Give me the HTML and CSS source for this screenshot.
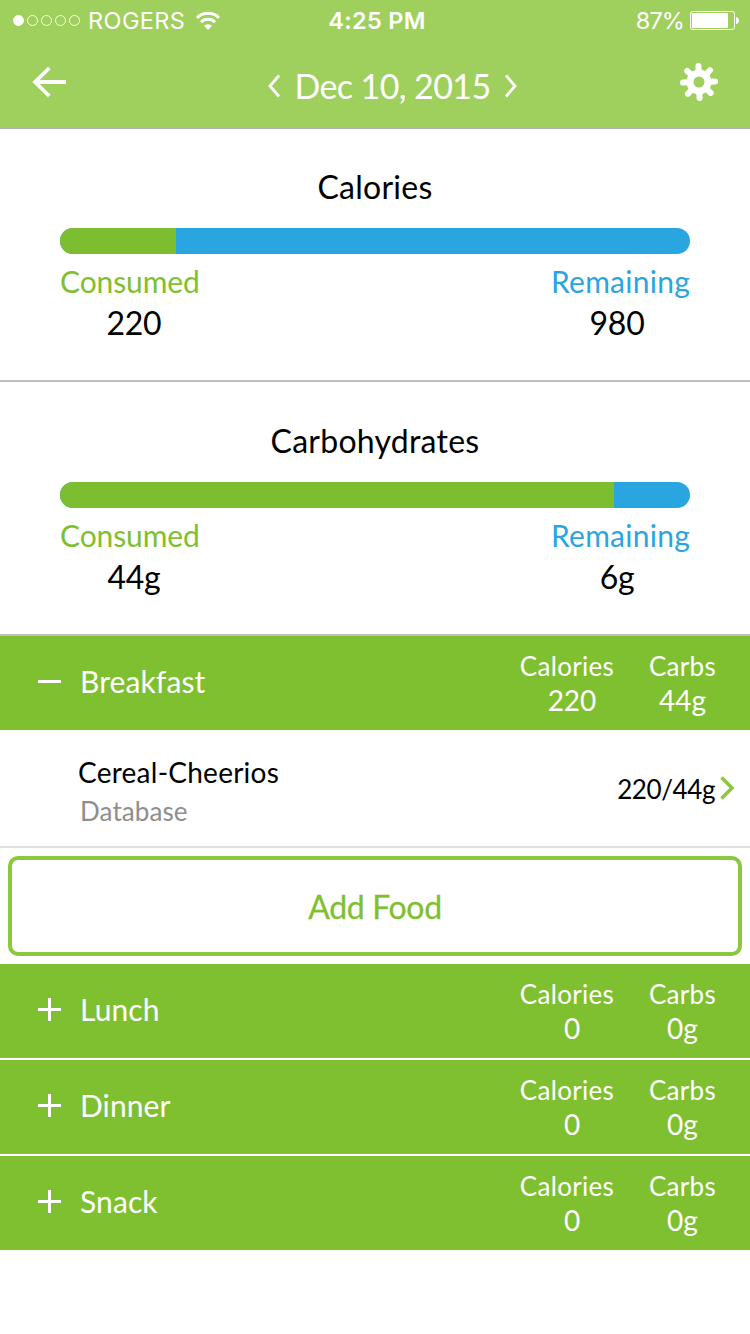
FILE: index.html
```html
<!DOCTYPE html>
<html lang="en">
<head>
    <meta charset="UTF-8">
    <meta name="viewport" content="width=device-width, initial-scale=1.0">
    <title>Food Diary</title>
    <link rel="stylesheet" href="styles.css">
</head>
<body>

<header class="header">
    <div class="status-bar">
        <div class="carrier">
            <div class="signal">
                <span class="dot filled"></span>
                <span class="dot"></span>
                <span class="dot"></span>
                <span class="dot"></span>
                <span class="dot"></span>
            </div>
            <span class="carrier-name">ROGERS</span>
            <svg class="wifi" width="26" height="20" viewBox="0 0 26 20">
                <path d="M2 6.8a15.8 15.8 0 0 1 22 0" fill="none" stroke="#fff" stroke-width="3"/>
                <path d="M6 11.2a10 10 0 0 1 14 0" fill="none" stroke="#fff" stroke-width="3"/>
                <path d="M13 19l-4-4.2a5.8 5.8 0 0 1 8 0z" fill="#fff"/>
            </svg>
        </div>
        <div class="time">4:25 PM</div>
        <div class="battery">
            <span class="percent">87%</span>
            <svg width="49" height="19" viewBox="0 0 49 19">
                <rect x="0.5" y="0.5" width="44" height="18" rx="2.5" fill="none" stroke="#fff"/>
                <rect x="2" y="2" width="36" height="15" rx="1" fill="#fff"/>
                <path d="M46 6q3 0.5 3 3.5t-3 3.5z" fill="#fff"/>
            </svg>
        </div>
    </div>
    <nav class="nav">
        <svg class="back" width="36" height="32" viewBox="0 0 36 32">
            <path d="M34 16H3M17.3 2L3 16l14.3 14" fill="none" stroke="#fff" stroke-width="3.8"/>
        </svg>
        <div class="date">
            <svg width="14" height="24" viewBox="0 0 14 24">
                <path d="M12 1.5L3 12l9 10.5" fill="none" stroke="#fff" stroke-width="2.8"/>
            </svg>
            <span class="date-text">Dec 10, 2015</span>
            <svg width="14" height="24" viewBox="0 0 14 24">
                <path d="M2 1.5L11 12 2 22.5" fill="none" stroke="#fff" stroke-width="2.8"/>
            </svg>
        </div>
        <svg class="gear" width="38" height="38" viewBox="-19 -19 38 38">
            <g transform="rotate(-2)" stroke="#fff" stroke-width="6" stroke-linecap="round">
                <path d="M0 -16V-10M0 16V10M-16 0H-10M16 0H10"/>
                <path d="M-11.4 -11.4l4 4M11.4 -11.4l-4 4M-11.4 11.4l4 -4M11.4 11.4l-4 -4"/>
            </g>
            <circle r="9" fill="none" stroke="#fff" stroke-width="7"/>
        </svg>
    </nav>
</header>

<section class="summary">
    <h2>Calories</h2>
    <div class="bar">
        <div class="bar-fill" style="width: 18.4%"></div>
    </div>
    <div class="totals">
        <div class="total consumed">
            <div class="label">Consumed</div>
            <div class="value">220</div>
        </div>
        <div class="total remaining">
            <div class="label">Remaining</div>
            <div class="value">980</div>
        </div>
    </div>
</section>

<section class="summary">
    <h2>Carbohydrates</h2>
    <div class="bar">
        <div class="bar-fill" style="width: 88%"></div>
    </div>
    <div class="totals">
        <div class="total consumed">
            <div class="label">Consumed</div>
            <div class="value">44g</div>
        </div>
        <div class="total remaining">
            <div class="label">Remaining</div>
            <div class="value">6g</div>
        </div>
    </div>
</section>

<main class="meals">
    <div class="meal">
        <svg class="toggle" width="23" height="23" viewBox="0 0 23 23"><path d="M0 11.5h23" stroke="#fff" stroke-width="3"/></svg>
        <div class="meal-name">Breakfast</div>
        <div class="stat calories"><div>Calories</div><div class="stat-value">220</div></div>
        <div class="stat carbs"><div>Carbs</div><div class="stat-value">44g</div></div>
    </div>

    <div class="food">
        <div class="food-info">
            <div class="food-name">Cereal-Cheerios</div>
            <div class="food-source">Database</div>
        </div>
        <div class="food-amount">220/44g</div>
        <svg class="chevron" width="16" height="26" viewBox="0 0 16 26">
            <path d="M2.5 2.5L13 13 2.5 23.5" fill="none" stroke="#8dc63f" stroke-width="3.6"/>
        </svg>
    </div>

    <button class="add-food">Add Food</button>

    <div class="meal">
        <svg class="toggle" width="23" height="23" viewBox="0 0 23 23"><path d="M0 11.5h23M11.5 0v23" stroke="#fff" stroke-width="3"/></svg>
        <div class="meal-name">Lunch</div>
        <div class="stat calories"><div>Calories</div><div class="stat-value">0</div></div>
        <div class="stat carbs"><div>Carbs</div><div class="stat-value">0g</div></div>
    </div>
    <div class="meal">
        <svg class="toggle" width="23" height="23" viewBox="0 0 23 23"><path d="M0 11.5h23M11.5 0v23" stroke="#fff" stroke-width="3"/></svg>
        <div class="meal-name">Dinner</div>
        <div class="stat calories"><div>Calories</div><div class="stat-value">0</div></div>
        <div class="stat carbs"><div>Carbs</div><div class="stat-value">0g</div></div>
    </div>
    <div class="meal">
        <svg class="toggle" width="23" height="23" viewBox="0 0 23 23"><path d="M0 11.5h23M11.5 0v23" stroke="#fff" stroke-width="3"/></svg>
        <div class="meal-name">Snack</div>
        <div class="stat calories"><div>Calories</div><div class="stat-value">0</div></div>
        <div class="stat carbs"><div>Carbs</div><div class="stat-value">0g</div></div>
    </div>
</main>

</body>
</html>
```
FILE: styles.css
```css
* {
    box-sizing: border-box;
}

body {
    font-family: 'Lato', sans-serif;
    margin: 0;
    background-color: #fff;
    color: #000;
}

svg {
    display: block;
    flex: none;
}

/* Header */
.header {
    height: 128px;
    background-color: #9fcf5d;
    box-shadow: 0 1px 0 #b2b2b2;
    color: #fff;
}

.status-bar {
    display: grid;
    grid-template-columns: 1fr auto 1fr;
    align-items: center;
    height: 41px;
    padding: 0 11px 0 13px;
    font-family: 'Inter', sans-serif;
    font-size: 23.5px;
}

.carrier {
    display: flex;
    align-items: center;
}

.carrier-name {
    letter-spacing: 0.4px;
}

.signal {
    display: flex;
    gap: 3px;
    margin-right: 8px;
}

.dot {
    width: 11px;
    height: 11px;
    border: 1px solid #fff;
    border-radius: 50%;
}

.dot.filled {
    background-color: #fff;
}

.wifi {
    margin-left: 10px;
}

.time {
    padding-left: 2px;
    font-weight: 600;
    letter-spacing: 0.3px;
}

.battery {
    display: flex;
    align-items: center;
    justify-content: flex-end;
    gap: 6px;
}

.percent {
    letter-spacing: -0.9px;
}

.nav {
    display: grid;
    grid-template-columns: 1fr auto 1fr;
    align-items: center;
    height: 82px;
    padding: 0 32px 0 32px;
}

.date {
    display: flex;
    align-items: center;
    gap: 13px;
    padding: 7px 0 0 35px;
}

.date-text {
    font-size: 34px;
    line-height: 40px;
    letter-spacing: -0.6px;
}

.gear {
    justify-self: end;
}

/* Daily totals */
.summary {
    height: 254px;
    padding: 39px 60px 0;
    border-bottom: 2px solid #bfbfbf;
}

.summary h2 {
    margin: 0 0 21px;
    font-size: 32px;
    font-weight: 400;
    line-height: 40px;
    letter-spacing: 0.25px;
    text-align: center;
}

.bar {
    height: 26px;
    border-radius: 13px;
    background-color: #29a6df;
    overflow: hidden;
}

.bar-fill {
    height: 100%;
    background-color: #7dbe31;
}

.totals {
    display: flex;
    justify-content: space-between;
    margin-top: 7px;
    line-height: 40px;
    text-align: center;
}

.label {
    font-size: 30px;
}

.value {
    padding-top: 2px;
    font-size: 32px;
    letter-spacing: -0.3px;
}

.consumed .value {
    padding-left: 8px;
}

.remaining .value {
    padding-right: 7px;
}

.consumed .label {
    color: #7fc031;
    letter-spacing: -0.1px;
}

.remaining .label {
    color: #29a6df;
    letter-spacing: 0.25px;
}

/* Meals */
.meal {
    display: flex;
    align-items: center;
    height: 94px;
    padding: 0 0 3px 38px;
    background-color: #7fc031;
    color: #fff;
}

.meal + .meal {
    margin-top: 2px;
}

.meal-name {
    flex: 1;
    padding: 0 0 1px 19px;
    font-size: 30px;
    letter-spacing: 0.1px;
}

.stat {
    padding-top: 2px;
    font-size: 26px;
    line-height: 34px;
    letter-spacing: 0.3px;
    text-align: center;
}

.stat-value {
    font-size: 28px;
    letter-spacing: 0;
}

.calories {
    width: 96px;
}

.calories .stat-value {
    padding-left: 10px;
}

.carbs {
    width: 135px;
}

.food {
    display: flex;
    align-items: center;
    height: 118px;
    padding: 0 15px 0 78px;
    border-bottom: 2px solid #dfdfdf;
}

.food-info {
    flex: 1;
    padding-top: 6px;
}

.food-name {
    font-size: 28px;
    line-height: 38px;
    letter-spacing: 0.25px;
}

.food-source {
    padding: 1px 0 0 2px;
    font-size: 26px;
    line-height: 38px;
    letter-spacing: 0.1px;
    color: #8e8e8e;
}

.food-amount {
    margin-right: 4px;
    padding-top: 1px;
    font-size: 26px;
    letter-spacing: -0.4px;
}

.add-food {
    display: block;
    width: 734px;
    height: 100px;
    margin: 8px;
    border: 4px solid #8dc740;
    border-radius: 10px;
    background-color: #fff;
    color: #7fc031;
    font-family: inherit;
    font-size: 32px;
    letter-spacing: -0.35px;
    -webkit-text-stroke: 0.3px #7fc031;
}
```
